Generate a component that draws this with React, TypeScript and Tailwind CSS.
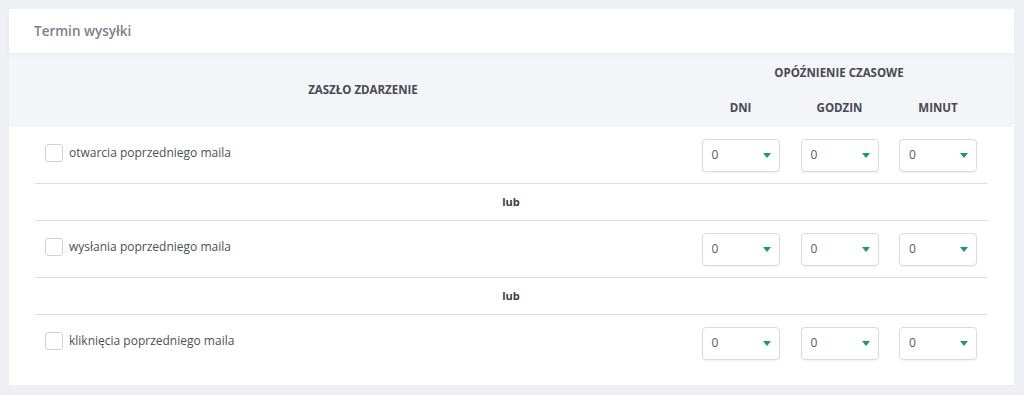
const events = [
  "otwarcia poprzedniego maila",
  "wysłania poprzedniego maila",
  "kliknięcia poprzedniego maila",
];

function Select() {
  return (
    <div className="mx-auto flex h-[33px] w-[78px] items-center justify-between rounded-[4px] border border-[#d9dbdf] bg-white pl-[9px] pr-[8px] shadow-[0_1px_2px_rgba(0,0,0,0.06)]">
      <span className="text-[12px] text-[#555a63]">0</span>
      <span className="h-0 w-0 border-x-[4px] border-t-[5px] border-x-transparent border-t-[#1a9a6c]" />
    </div>
  );
}

function EventRow({ label }: { label: string }) {
  return (
    <div className="grid h-[56px] grid-cols-[1fr_99px_99px_98px] items-center">
      <label className="flex items-center gap-[6px] pl-[10px] pb-[4px]">
        <span className="h-[18px] w-[18px] rounded-[3px] border border-[#cfd2d6] bg-white" />
        <span className="text-[12px] text-[#4b4f57]">{label}</span>
      </label>
      <Select />
      <Select />
      <Select />
    </div>
  );
}

function Divider() {
  return <div className="h-px bg-[#dcdde0]" />;
}

export default function App() {
  return (
    <div className="min-h-[395px] bg-[#eef0f4] pt-[9px] pl-[9px] pr-[10px] font-['Open_Sans',sans-serif]">
      <div className="bg-white pb-[14px]">
        {/* Title */}
        <div className="relative z-10 flex h-[44px] items-center px-[25px] shadow-[0_2px_4px_rgba(0,0,0,0.04)]">
          <h2 className="text-[13.5px] font-semibold text-[#7c818a]">Termin wysyłki</h2>
        </div>

        {/* Table head */}
        <div className="bg-[#f4f5f8] pl-[26px] pr-[27px]">
          <div className="grid h-[74px] grid-cols-[1fr_99px_99px_98px] grid-rows-2 text-[11.5px] font-bold uppercase text-[#464a52]">
            <div className="row-span-2 flex items-center justify-center">Zaszło zdarzenie</div>
            <div className="col-span-3 flex items-center justify-center pt-[2px]">Opóźnienie czasowe</div>
            <div className="flex items-center justify-center pb-[2px]">Dni</div>
            <div className="flex items-center justify-center pb-[2px]">Godzin</div>
            <div className="flex items-center justify-center pb-[2px]">Minut</div>
          </div>
        </div>

        {/* Rows */}
        <div className="pl-[26px] pr-[27px]">
          {events.map((e, i) => (
            <div key={e}>
              <EventRow label={e} />
              {i < events.length - 1 && (
                <>
                  <Divider />
                  <div className="flex h-[36px] items-center justify-center text-[11px] font-bold text-[#3b3f47]">
                    lub
                  </div>
                  <Divider />
                </>
              )}
            </div>
          ))}
        </div>
      </div>
    </div>
  );
}
